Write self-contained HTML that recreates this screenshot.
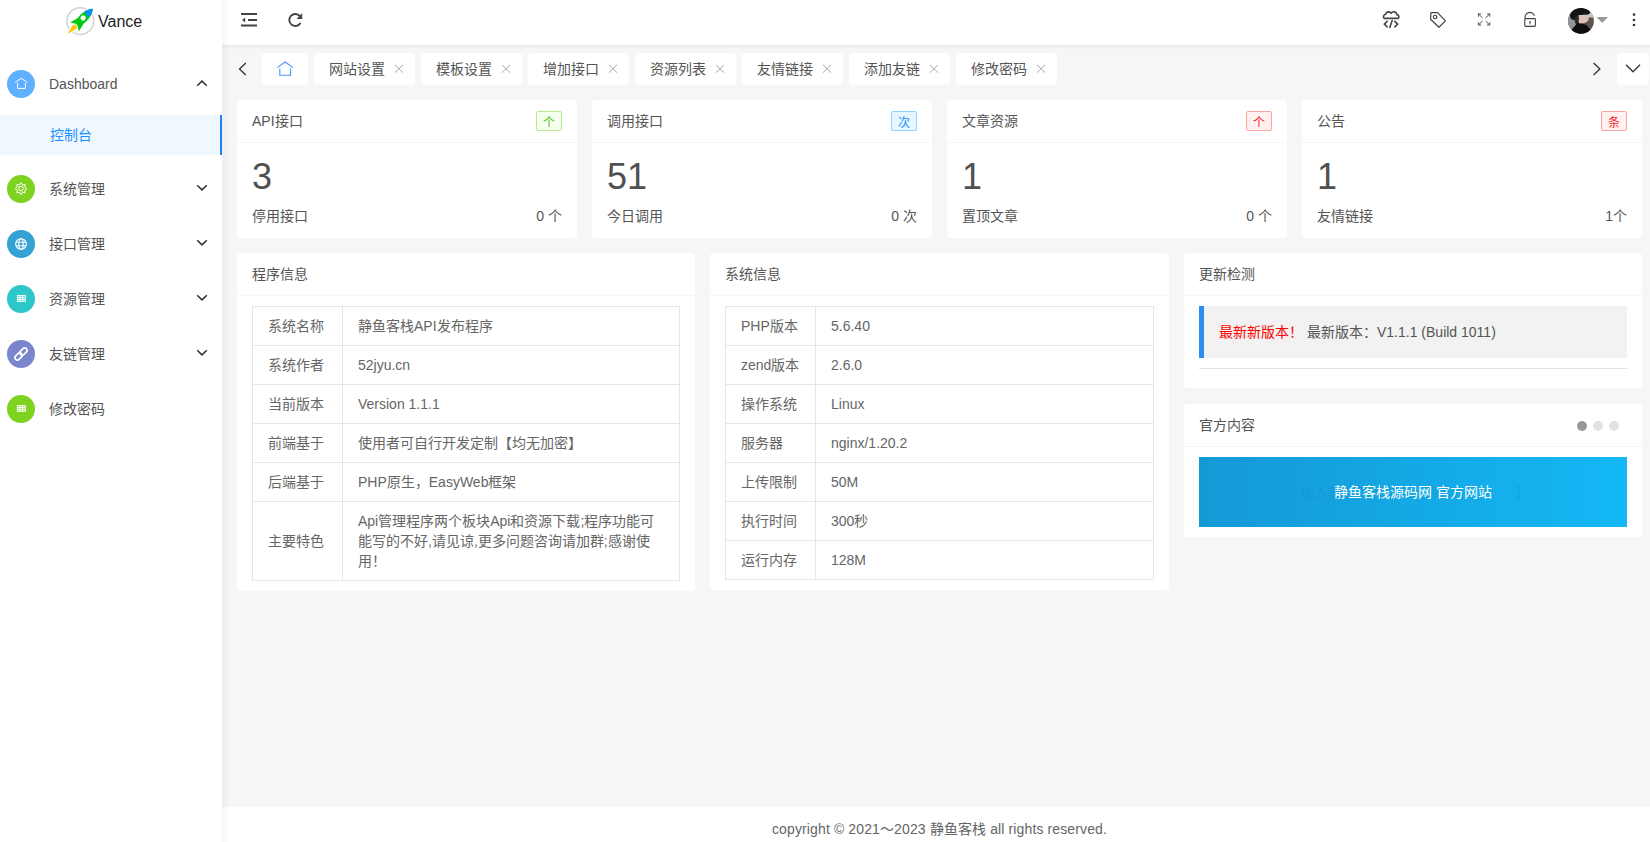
<!DOCTYPE html>
<html lang="zh-CN"><head><meta charset="utf-8">
<style>
*{margin:0;padding:0;box-sizing:border-box;}
html,body{width:1650px;height:842px;overflow:hidden;}
body{font-family:"Liberation Sans",sans-serif;font-size:14px;color:#333;background:#f5f6f8;position:relative;}
.abs{position:absolute;}
/* sidebar */
#side{position:absolute;left:0;top:0;width:222px;height:842px;background:#fff;z-index:3;}
#sideshadow{position:absolute;left:222px;top:0;width:8px;height:842px;background:linear-gradient(to right,rgba(0,0,0,0.035),rgba(0,0,0,0));z-index:2;}
.logo{position:absolute;left:66px;top:7px;width:28px;height:28px;}
.logotxt{position:absolute;left:98px;top:11px;font-size:16px;color:#222;line-height:22px;}
.mi{position:absolute;left:0;width:222px;height:55px;}
.mi .ic{position:absolute;left:7px;top:14px;width:28px;height:28px;border-radius:50%;}
.mi .ic svg{position:absolute;left:0;top:0;}
.mi .tx{position:absolute;left:49px;top:1px;line-height:55px;font-size:14px;color:#555;}
.mi .ar{position:absolute;left:196px;top:23px;}
.sub{position:absolute;left:0;top:115px;width:222px;height:40px;background:#f0f7ff;border-right:2px solid #1c84f8;}
.sub .tx{position:absolute;left:50px;top:0;line-height:40px;color:#1890ff;}
/* header */
#head{position:absolute;left:222px;top:0;width:1428px;height:45px;background:#fff;z-index:1;}
#headshadow{position:absolute;left:222px;top:45px;width:1428px;height:4px;background:linear-gradient(to bottom,rgba(20,50,90,0.07),rgba(20,50,90,0));z-index:1;}
/* tabs */
.tab{position:absolute;top:53px;height:32px;background:#fff;border-radius:4px;line-height:32px;color:#555;}
.tab .t{position:absolute;left:15px;top:0;}
.tab .x{position:absolute;left:80px;top:11px;}
/* cards */
.card{position:absolute;background:#fff;border-radius:4px;}
.card .hd{position:absolute;left:0;top:0;right:0;height:43px;border-bottom:1px solid #f6f6f6;line-height:42px;padding-left:15px;color:#555;}
.badge{position:absolute;top:11px;right:15px;height:20px;width:26px;line-height:22px;text-align:center;font-size:12px;border:1px solid;border-radius:2px;}
.big{position:absolute;left:15px;top:59px;line-height:36px;font-size:36px;color:#505050;}
table.lt{position:absolute;border-collapse:collapse;}
table.lt td{border:1px solid #e6e6e6;padding:9px 15px;line-height:20px;color:#666;}
.bl{position:absolute;left:15px;top:106px;line-height:20px;color:#555;}
.br{position:absolute;right:15px;top:106px;line-height:20px;color:#555;}
table.lt td.c1{width:90px;}
.quote{position:absolute;left:15px;top:53px;width:428px;height:52px;background:#f2f2f2;border-left:5px solid #2d8cf0;border-radius:0 2px 2px 0;padding-left:15px;line-height:53px;color:#555;}
.banner{position:absolute;left:15px;top:53px;width:428px;height:70px;background:linear-gradient(to right,#1599d5,#13b8f5);overflow:hidden;}
.btxt{position:absolute;left:0;right:0;top:0;line-height:70px;text-align:center;color:#fff;}
.ghost{position:absolute;left:101px;top:0;line-height:70px;color:rgba(0,70,140,0.11);white-space:nowrap;}
#foot{position:absolute;left:222px;top:807px;width:1428px;height:35px;background:#fff;text-align:center;line-height:44px;color:#666;letter-spacing:0.12px;padding-left:7px;}
</style></head>
<body>
<div id="side">
  <svg class="logo" style="left:60px;top:0px;width:40px;height:42px" viewBox="60 0 40 42">
    <defs><clipPath id="tipc"><rect x="-10" y="-20" width="20" height="11.7"/></clipPath></defs>
    <circle cx="80.3" cy="21.1" r="13.4" fill="none" stroke="#d2d2d2" stroke-width="1.5"/>
    <g transform="translate(81 20.5) rotate(45)">
      <path id="rb" d="M0 -16.5 C2.8 -14 4.4 -9 4.4 -3 L4 0.5 L6.2 9.2 L2 6.4 L0 5.8 L-2 6.4 L-6.2 9.2 L-4 0.5 L-4.4 -3 C-4.4 -9 -2.8 -14 0 -16.5 Z" fill="#fff" stroke="#fff" stroke-width="2.2"/>
      <path d="M0 6.6 C2.6 6.6 2.8 9.5 2.1 11.6 L0.3 18.2 L-0.3 18.2 L-2.1 11.6 C-2.8 9.5 -2.6 6.6 0 6.6 Z" fill="#fff" stroke="#fff" stroke-width="2"/>
      <path d="M0 -16.5 C2.8 -14 4.4 -9 4.4 -3 L4 0.5 L6.2 9.2 L2 6.4 L0 5.8 L-2 6.4 L-6.2 9.2 L-4 0.5 L-4.4 -3 C-4.4 -9 -2.8 -14 0 -16.5 Z" fill="#00c814"/>
      <path clip-path="url(#tipc)" d="M0 -16.5 C2.8 -14 4.4 -9 4.4 -3 L-4.4 -3 C-4.4 -9 -2.8 -14 0 -16.5 Z" fill="#0b8fff"/>
      <path d="M0 6.6 C2.6 6.6 2.8 9.5 2.1 11.6 L0.3 18.2 L-0.3 18.2 L-2.1 11.6 C-2.8 9.5 -2.6 6.6 0 6.6 Z" fill="#ffc816"/>
      <circle cx="-0.3" cy="-3.3" r="2.6" fill="#fff"/>
    </g>
  </svg>
  <div class="logotxt">Vance</div>
  <div class="mi" style="top:56px"><div class="ic" style="background:#5fb0ff"><svg width="28" height="28" viewBox="0 0 28 28"><path d="M8.2 12.4 L14.2 8.3 L20.4 12.4" fill="none" stroke="#fff" stroke-width="1"/><path d="M10.6 13 V18.4 H18.4 V13" fill="none" stroke="#fff" stroke-width="1"/></svg></div><div class="tx">Dashboard</div>
    <svg class="ar" style="left:196px;top:24px" width="12" height="7" viewBox="0 0 12 7"><path d="M1.2 5.8 L6 1.1 L10.8 5.8" fill="none" stroke="#333" stroke-width="1.5"/></svg></div>
  <div class="sub"><div class="tx">控制台</div></div>
  <div class="mi" style="top:161px"><div class="ic" style="background:#7ed321"><svg width="28" height="28" viewBox="0 0 28 28"><g fill="none" stroke="#fff" stroke-width="1" stroke-linejoin="round"><circle cx="14" cy="13.6" r="2.3"/><path d="M14.00 7.70 L15.53 9.90 L18.17 9.43 L17.70 12.07 L19.90 13.60 L17.70 15.13 L18.17 17.77 L15.53 17.30 L14.00 19.50 L12.47 17.30 L9.83 17.77 L10.30 15.13 L8.10 13.60 L10.30 12.07 L9.83 9.43 L12.47 9.90 Z"/></g></svg></div><div class="tx">系统管理</div>
    <svg class="ar" style="left:196px;top:23px" width="12" height="7" viewBox="0 0 12 7"><path d="M1.2 1.2 L6 5.9 L10.8 1.2" fill="none" stroke="#333" stroke-width="1.5"/></svg></div>
  <div class="mi" style="top:216px"><div class="ic" style="background:#35a2d6"><svg width="28" height="28" viewBox="0 0 28 28"><g fill="none" stroke="#fff" stroke-width="1.1"><circle cx="14" cy="14" r="5.3"/><ellipse cx="14" cy="14" rx="2.2" ry="5.3"/><path d="M8.7 12.3 H19.3 M8.7 15.7 H19.3"/></g></svg></div><div class="tx">接口管理</div>
    <svg class="ar" style="left:196px;top:23px" width="12" height="7" viewBox="0 0 12 7"><path d="M1.2 1.2 L6 5.9 L10.8 1.2" fill="none" stroke="#333" stroke-width="1.5"/></svg></div>
  <div class="mi" style="top:271px"><div class="ic" style="background:#2ec7c9"><svg width="28" height="28" viewBox="0 0 28 28"><rect x="9.9" y="10" width="8.9" height="7" fill="#fff"/><rect x="10.7" y="10.8" width="1.8" height="1.2" fill="#2ec7c9" opacity="0.75"/><rect x="10.7" y="12.9" width="1.8" height="1.2" fill="#2ec7c9" opacity="0.75"/><rect x="10.7" y="15.0" width="1.8" height="1.2" fill="#2ec7c9" opacity="0.75"/><rect x="13.5" y="10.8" width="1.8" height="1.2" fill="#2ec7c9" opacity="0.75"/><rect x="13.5" y="12.9" width="1.8" height="1.2" fill="#2ec7c9" opacity="0.75"/><rect x="13.5" y="15.0" width="1.8" height="1.2" fill="#2ec7c9" opacity="0.75"/><rect x="16.2" y="10.8" width="1.8" height="1.2" fill="#2ec7c9" opacity="0.75"/><rect x="16.2" y="12.9" width="1.8" height="1.2" fill="#2ec7c9" opacity="0.75"/><rect x="16.2" y="15.0" width="1.8" height="1.2" fill="#2ec7c9" opacity="0.75"/></svg></div><div class="tx">资源管理</div>
    <svg class="ar" style="left:196px;top:23px" width="12" height="7" viewBox="0 0 12 7"><path d="M1.2 1.2 L6 5.9 L10.8 1.2" fill="none" stroke="#333" stroke-width="1.5"/></svg></div>
  <div class="mi" style="top:326px"><div class="ic" style="background:#7986cb"><svg width="28" height="28" viewBox="0 0 28 28"><g fill="none" stroke="#fff" stroke-width="1.7" transform="rotate(-45 14 14)"><rect x="6.5" y="11.6" width="8.2" height="4.8" rx="2.4"/><rect x="13.3" y="11.6" width="8.2" height="4.8" rx="2.4"/></g></svg></div><div class="tx">友链管理</div>
    <svg class="ar" style="left:196px;top:23px" width="12" height="7" viewBox="0 0 12 7"><path d="M1.2 1.2 L6 5.9 L10.8 1.2" fill="none" stroke="#333" stroke-width="1.5"/></svg></div>
  <div class="mi" style="top:381px"><div class="ic" style="background:#7ed321"><svg width="28" height="28" viewBox="0 0 28 28"><rect x="9.9" y="10" width="8.9" height="7" fill="#fff"/><rect x="10.7" y="10.8" width="1.8" height="1.2" fill="#7ed321" opacity="0.75"/><rect x="10.7" y="12.9" width="1.8" height="1.2" fill="#7ed321" opacity="0.75"/><rect x="10.7" y="15.0" width="1.8" height="1.2" fill="#7ed321" opacity="0.75"/><rect x="13.5" y="10.8" width="1.8" height="1.2" fill="#7ed321" opacity="0.75"/><rect x="13.5" y="12.9" width="1.8" height="1.2" fill="#7ed321" opacity="0.75"/><rect x="13.5" y="15.0" width="1.8" height="1.2" fill="#7ed321" opacity="0.75"/><rect x="16.2" y="10.8" width="1.8" height="1.2" fill="#7ed321" opacity="0.75"/><rect x="16.2" y="12.9" width="1.8" height="1.2" fill="#7ed321" opacity="0.75"/><rect x="16.2" y="15.0" width="1.8" height="1.2" fill="#7ed321" opacity="0.75"/></svg></div><div class="tx">修改密码</div></div>
</div>
<div id="sideshadow"></div>
<div id="head">
  <svg class="abs" style="left:0;top:0" width="100" height="45" viewBox="222 0 100 45">
    <g fill="#444">
      <rect x="241" y="13" width="16" height="2"/>
      <rect x="248" y="19" width="9" height="2"/>
      <rect x="241" y="24.5" width="16" height="2"/>
      <path d="M242 20 L245.2 17.6 V22.4 Z"/>
    </g>
    <path d="M299.9 16.1 A6 6 0 1 0 300.5 23" fill="none" stroke="#444" stroke-width="1.9"/>
    <path d="M302.2 13 V18.9 H296.6 Z" fill="#444"/>
  </svg>
  <svg class="abs" style="left:1150px;top:0" width="278" height="45" viewBox="1372 0 278 45">
    <g fill="none" stroke="#444" stroke-width="1.6" stroke-linejoin="round" stroke-linecap="round">
      <path d="M1384.2 18.4 A2.4 2.4 0 0 1 1385.6 14.3 A3.1 3.1 0 0 1 1391.2 13.2 A3.1 3.1 0 0 1 1396.9 14.6 A2.2 2.2 0 0 1 1398.2 18.4 Z"/>
      <path d="M1387.2 21.4 L1384.3 24.1 L1387.2 26.8 M1394.8 21.4 L1397.7 24.1 L1394.8 26.8 M1392.2 20.6 L1389.8 27.5"/>
    </g>
    <g fill="none" stroke="#444" stroke-width="1.2" stroke-linejoin="round">
      <path d="M1430.9 12.6 H1437.6 L1445.4 20.9 L1438.9 27.3 L1430.6 19.3 Z"/>
      <circle cx="1435.1" cy="17" r="1.75"/>
    </g>
    <g fill="none" stroke="#555" stroke-width="1">
      <path d="M1478.4 13.9 L1482.6 18 M1478.4 13.9 H1481.2 M1478.4 13.9 V16.7"/>
      <path d="M1489.8 13.9 L1485.6 18 M1489.8 13.9 H1487 M1489.8 13.9 V16.7"/>
      <path d="M1478.4 25 L1482.6 21 M1478.4 25 H1481.2 M1478.4 25 V22.2"/>
      <path d="M1489.8 25 L1485.6 21 M1489.8 25 H1487 M1489.8 25 V22.2"/>
    </g>
    <g fill="none" stroke="#444" stroke-width="1.1">
      <rect x="1524.8" y="18.6" width="10.6" height="7.8" rx="0.8"/>
      <path d="M1525.3 18.6 A4.7 4.7 0 0 1 1534.4 15.8"/>
    </g>
    <path d="M1529.1 21.3 H1530.9 L1530.3 24.6 H1529.7 Z" fill="#444"/>
    <path d="M1596.5 17 H1608 L1602.2 23 Z" fill="#999"/>
    <g fill="#333"><circle cx="1634" cy="14.6" r="1.3"/><circle cx="1634" cy="20" r="1.3"/><circle cx="1634" cy="25" r="1.3"/></g>
  </svg>
  <svg class="abs" style="left:1346px;top:8px" width="26" height="26" viewBox="0 0 26 26">
    <defs><clipPath id="av"><circle cx="13" cy="12.9" r="12.9"/></clipPath></defs>
    <g clip-path="url(#av)">
      <rect width="26" height="26" fill="#5e5250"/>
      <path d="M0 0 H8.5 L8.5 21 L4 22 L0 22 Z" fill="#8e959c"/>
      <rect x="19" y="4" width="7" height="5.5" fill="#c9c5c3"/>
      <path d="M10 7 C13 5.5 18 5.5 20.5 7 L20.5 12 C19 14.5 16.5 15.5 13.5 15 L10 13.5 Z" fill="#dcc2b4"/>
      <path d="M10.5 12.5 L13.5 15 L12 16 Z" fill="#f2d5c0"/>
      <path d="M2 8 C2 3 7 0 12 0 C17 0 21 1.5 22.5 4.5 L20.5 6.5 L12 7 L9 8 L6 12 L3 11 Z" fill="#141414"/>
      <path d="M6 11 L9 8 L11 8.5 L10.5 15 L8 17 Z" fill="#2c2826"/>
      <path d="M0 26 L4 21.3 L9.5 14.9 L18.3 16.8 L21.3 20.6 L26 24 V26 Z" fill="#0e0e0e"/>
    </g>
  </svg>
</div>
<div id="headshadow"></div>

<svg class="abs" style="left:236px;top:60px" width="14" height="18" viewBox="236 60 14 18"><path d="M245.8 63 L239.5 69 L245.8 75" fill="none" stroke="#333" stroke-width="1.3"/></svg>
<div class="tab" style="left:262px;width:46px"><svg class="abs" style="left:0;top:0" width="46" height="32" viewBox="262 53 46 32"><path d="M277.3 67.6 L285.3 62 L293 67.6" fill="none" stroke="#4a93ff" stroke-width="1.1"/><path d="M279.8 68.4 V75.3 H290.6 V68.4" fill="none" stroke="#4a93ff" stroke-width="1.1"/></svg></div>
<div class="tab" style="left:314px;width:101px"><span class="t">网站设置</span><svg class="x" width="10" height="10" viewBox="0 0 10 10"><path d="M1 0.8 L9 8.6 M9 0.8 L1 8.6" stroke="#a6a6a6" stroke-width="1"/></svg></div>
<div class="tab" style="left:421px;width:101px"><span class="t">模板设置</span><svg class="x" width="10" height="10" viewBox="0 0 10 10"><path d="M1 0.8 L9 8.6 M9 0.8 L1 8.6" stroke="#a6a6a6" stroke-width="1"/></svg></div>
<div class="tab" style="left:528px;width:101px"><span class="t">增加接口</span><svg class="x" width="10" height="10" viewBox="0 0 10 10"><path d="M1 0.8 L9 8.6 M9 0.8 L1 8.6" stroke="#a6a6a6" stroke-width="1"/></svg></div>
<div class="tab" style="left:635px;width:101px"><span class="t">资源列表</span><svg class="x" width="10" height="10" viewBox="0 0 10 10"><path d="M1 0.8 L9 8.6 M9 0.8 L1 8.6" stroke="#a6a6a6" stroke-width="1"/></svg></div>
<div class="tab" style="left:742px;width:101px"><span class="t">友情链接</span><svg class="x" width="10" height="10" viewBox="0 0 10 10"><path d="M1 0.8 L9 8.6 M9 0.8 L1 8.6" stroke="#a6a6a6" stroke-width="1"/></svg></div>
<div class="tab" style="left:849px;width:101px"><span class="t">添加友链</span><svg class="x" width="10" height="10" viewBox="0 0 10 10"><path d="M1 0.8 L9 8.6 M9 0.8 L1 8.6" stroke="#a6a6a6" stroke-width="1"/></svg></div>
<div class="tab" style="left:956px;width:101px"><span class="t">修改密码</span><svg class="x" width="10" height="10" viewBox="0 0 10 10"><path d="M1 0.8 L9 8.6 M9 0.8 L1 8.6" stroke="#a6a6a6" stroke-width="1"/></svg></div>
<svg class="abs" style="left:1590px;top:60px" width="14" height="18" viewBox="1590 60 14 18"><path d="M1593.6 63 L1599.9 69 L1593.6 75" fill="none" stroke="#333" stroke-width="1.3"/></svg>
<div class="tab" style="left:1617px;width:32px"><svg class="abs" style="left:0;top:0" width="32" height="32" viewBox="1617 53 32 32"><path d="M1626 64.8 L1633 71.8 L1640 64.8" fill="none" stroke="#333" stroke-width="1.3"/></svg></div>

<div class="card" style="left:237px;top:100px;width:340px;height:138px"><div class="hd">API接口</div><div class="badge" style="border-color:#b7eb8f;background:#f6ffed;color:#52c41a">个</div>
  <div class="big">3</div><div class="bl">停用接口</div><div class="br">0 个</div></div>
<div class="card" style="left:592px;top:100px;width:340px;height:138px"><div class="hd">调用接口</div><div class="badge" style="border-color:#91d5ff;background:#e6f7ff;color:#1890ff">次</div>
  <div class="big">51</div><div class="bl">今日调用</div><div class="br">0 次</div></div>
<div class="card" style="left:947px;top:100px;width:340px;height:138px"><div class="hd">文章资源</div><div class="badge" style="border-color:#ffa39e;background:#fff1f0;color:#f5222d">个</div>
  <div class="big">1</div><div class="bl">置顶文章</div><div class="br">0 个</div></div>
<div class="card" style="left:1302px;top:100px;width:340px;height:138px"><div class="hd">公告</div><div class="badge" style="border-color:#ffa39e;background:#fff1f0;color:#f5222d">条</div>
  <div class="big">1</div><div class="bl">友情链接</div><div class="br">1个</div></div>
<div class="card" style="left:237px;top:253px;width:458px;height:338px"><div class="hd">程序信息</div><table class="lt" style="left:15px;top:53px;width:428px"><tr><td class="c1">系统名称</td><td>静鱼客栈API发布程序</td></tr><tr><td class="c1">系统作者</td><td>52jyu.cn</td></tr><tr><td class="c1">当前版本</td><td>Version 1.1.1</td></tr><tr><td class="c1">前端基于</td><td>使用者可自行开发定制【均无加密】</td></tr><tr><td class="c1">后端基于</td><td>PHP原生，EasyWeb框架</td></tr><tr><td class="c1">主要特色</td><td>Api管理程序两个板块Api和资源下载;程序功能可<br>能写的不好,请见谅,更多问题咨询请加群;感谢使<br>用！</td></tr></table></div>
<div class="card" style="left:710px;top:253px;width:459px;height:337px"><div class="hd">系统信息</div><table class="lt" style="left:15px;top:53px;width:429px"><tr><td class="c1">PHP版本</td><td>5.6.40</td></tr><tr><td class="c1">zend版本</td><td>2.6.0</td></tr><tr><td class="c1">操作系统</td><td>Linux</td></tr><tr><td class="c1">服务器</td><td>nginx/1.20.2</td></tr><tr><td class="c1">上传限制</td><td>50M</td></tr><tr><td class="c1">执行时间</td><td>300秒</td></tr><tr><td class="c1">运行内存</td><td>128M</td></tr></table></div>
<div class="card" style="left:1184px;top:253px;width:458px;height:135px"><div class="hd">更新检测</div>
  <div class="quote"><span style="color:#f00">最新新版本！</span><span style="margin-left:4px">最新版本</span>：V1.1.1 (Build 1011)</div>
  <div class="abs" style="left:15px;top:115px;width:428px;height:1px;background:#e2e2e2"></div>
</div>
<div class="card" style="left:1184px;top:404px;width:458px;height:133px"><div class="hd">官方内容</div>
  <div class="abs" style="left:393px;top:17px;width:10px;height:10px;border-radius:50%;background:#999"></div>
  <div class="abs" style="left:409px;top:17px;width:10px;height:10px;border-radius:50%;background:#e2e2e2"></div>
  <div class="abs" style="left:425px;top:17px;width:10px;height:10px;border-radius:50%;background:#e2e2e2"></div>
  <div class="banner"><div class="ghost">加入群聊交流学习【点击加入》<span style="margin-left:26px">】</span></div><div class="btxt">静鱼客栈源码网 官方网站</div></div>
</div>
<div id="foot">copyright © 2021～2023 静鱼客栈 all rights reserved.</div>
</body></html>
